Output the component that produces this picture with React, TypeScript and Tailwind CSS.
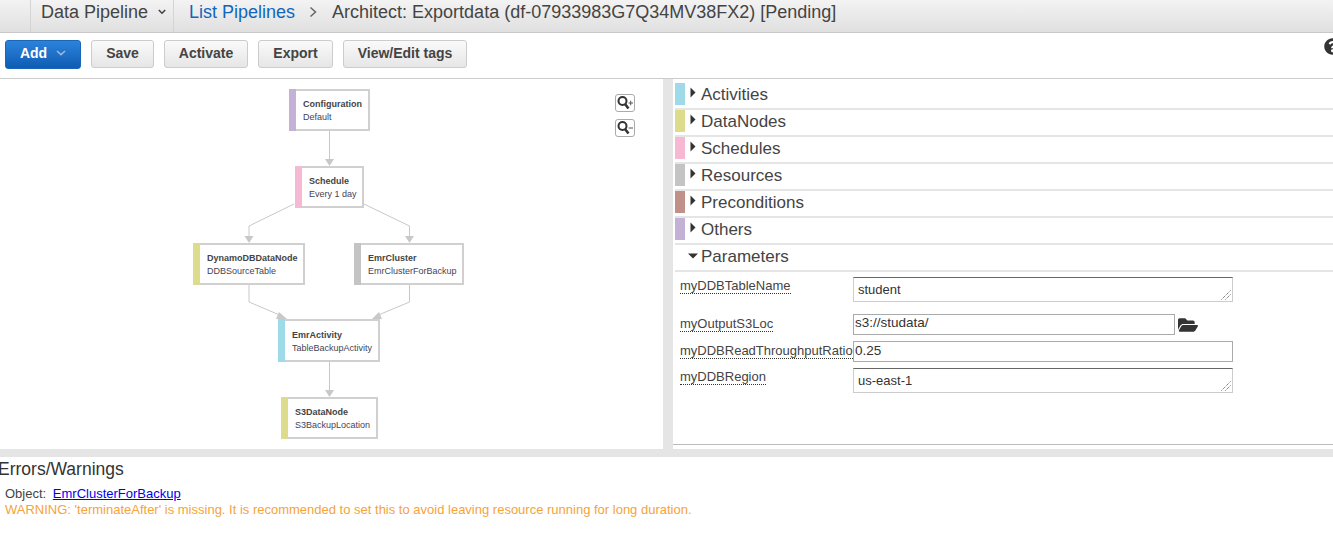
import { FaFolderOpen, FaQuestionCircle } from 'react-icons/fa';

const nodes = [
  { title: 'Configuration', sub: 'Default', left: 289, top: 89, width: 81, height: 42, strip: 'bg-[#c3b1d6]', pad: 'pl-[7px]' },
  { title: 'Schedule', sub: 'Every 1 day', left: 295, top: 166, width: 69, height: 42, strip: 'bg-[#f7b8d4]', pad: 'pl-[7px]' },
  { title: 'DynamoDBDataNode', sub: 'DDBSourceTable', left: 193, top: 243, width: 112, height: 42, strip: 'bg-[#dcdc8c]', pad: 'pl-[7px]' },
  { title: 'EmrCluster', sub: 'EmrClusterForBackup', left: 354, top: 243, width: 110, height: 42, strip: 'bg-[#c4c4c4]', pad: 'pl-[7px]' },
  { title: 'EmrActivity', sub: 'TableBackupActivity', left: 278, top: 319, width: 102, height: 43, strip: 'bg-[#9edae8]', pad: 'pl-[7px]' },
  { title: 'S3DataNode', sub: 'S3BackupLocation', left: 281, top: 397, width: 97, height: 42, strip: 'bg-[#dcdc8c]', pad: 'pl-[7px]' },
];

const sections = [
  { name: 'Activities', color: 'bg-[#9edae8]' },
  { name: 'DataNodes', color: 'bg-[#dcdc8c]' },
  { name: 'Schedules', color: 'bg-[#f7b8d4]' },
  { name: 'Resources', color: 'bg-[#c4c4c4]' },
  { name: 'Preconditions', color: 'bg-[#bf9188]' },
  { name: 'Others', color: 'bg-[#c3b1d6]' },
];

function Connectors() {
  const lines = [
    '329.5,131 329.5,160',
    '294,204 249,226 249,238',
    '364,204 409.5,226 409.5,238',
    '249,285 249,302 282,316',
    '409.5,285 409.5,302 376,316',
    '329.5,362 329.5,391',
  ];
  const heads = [
    '325,159 334,159 329.5,166',
    '244.5,236 253.5,236 249,243',
    '405,236 414,236 409.5,243',
    '279,312 276,319 287,319',
    '379,312 382,319 372,319',
    '325,390 334,390 329.5,397',
  ];
  return (
    <svg className="absolute left-0 top-0" width="663" height="449" viewBox="0 0 663 449">
      {lines.map((p) => (
        <polyline key={p} points={p} fill="none" stroke="#c8c8c8" strokeWidth="1" />
      ))}
      {heads.map((p) => (
        <polygon key={p} points={p} fill="#c8c8c8" />
      ))}
    </svg>
  );
}

function ZoomButton({ plus, className }: { plus: boolean; className: string }) {
  return (
    <div className={`absolute left-[615px] h-[18px] w-[20px] rounded-[3px] border border-[#aaa] bg-white ${className}`}>
      <svg width="18" height="16" viewBox="0 0 18 16">
        <circle cx="6.5" cy="6" r="4" fill="#fff" stroke="#333" strokeWidth="2" />
        <path d="M9 9l3.5 4.5" stroke="#333" strokeWidth="2.6" />
        <path d={plus ? 'M12.5 8h4.5M14.7 5.7v4.6' : 'M12.5 8h4.5'} stroke="#555" strokeWidth="1" fill="none" />
      </svg>
    </div>
  );
}

function ToolButton({ label, width }: { label: string; width: string }) {
  return (
    <button className={`h-[28px] ${width} rounded-[3px] border border-[#ccc] bg-gradient-to-b from-[#fafafa] to-[#e6e6e6] pb-[2px] text-[14px] font-bold text-[#444]`}>
      {label}
    </button>
  );
}

function ParamLabel({ text }: { text: string }) {
  return (
    <span className="border-b border-dotted border-[#333] text-[13px] leading-[15px] whitespace-nowrap text-[#444]">
      {text}
    </span>
  );
}

function Grip() {
  return (
    <svg className="absolute bottom-[1px] right-[1px]" width="10" height="10" viewBox="0 0 10 10">
      <path d="M0.5 9.5L9.5 0.5M4.5 9.5L9.5 4.5" stroke="#555" strokeWidth="1" strokeDasharray="1 1" />
    </svg>
  );
}

export default function App() {
  return (
    <div className="h-[536px] w-[1333px] overflow-hidden bg-white font-['Liberation_Sans',Arial,sans-serif] text-[#444]">
      {/* Top bar */}
      <div className="flex h-[33px] items-stretch border-b border-[#c8c8c8] bg-gradient-to-b from-[#f3f3f3] to-[#e0e0e0]">
        <div className="ml-[30px] flex w-[144px] items-center gap-[10px] border-x border-[#d4d4d4] pb-[8px] pl-[10px] text-[18px] whitespace-nowrap">
          Data Pipeline
          <svg width="8" height="6" viewBox="0 0 8 6">
            <path d="M0.8 1l3.2 3.2L7.2 1" fill="none" stroke="#444" strokeWidth="1.6" />
          </svg>
        </div>
        <div className="flex items-center pb-[8px] pl-[15px] text-[18px] whitespace-nowrap">
          <span className="text-[#1166bb]">List Pipelines</span>
          <svg className="mx-[14px]" width="9" height="12" viewBox="0 0 9 12">
            <path d="M1.5 1.5L6.5 6l-5 4.5" fill="none" stroke="#666" strokeWidth="1.5" />
          </svg>
          <span>Architect: Exportdata (df-07933983G7Q34MV38FX2) [Pending]</span>
        </div>
      </div>

      {/* Toolbar */}
      <div className="relative flex h-[46px] items-center gap-[10px] border-b border-[#ccc] pb-[3px] pl-[5px]">
        <button className="flex h-[29px] w-[76px] items-center justify-center gap-[9px] rounded-[3px] border border-[#1a66b8] bg-gradient-to-b from-[#2c83dc] to-[#0e5cb3] pb-[2px] text-[14px] font-bold text-white">
          Add
          <svg width="10" height="6" viewBox="0 0 10 6">
            <path d="M1 1l4 3.6L9 1" fill="none" stroke="#9db8d4" strokeWidth="1.6" />
          </svg>
        </button>
        <ToolButton label="Save" width="w-[63px]" />
        <ToolButton label="Activate" width="w-[84px]" />
        <ToolButton label="Export" width="w-[75px]" />
        <ToolButton label="View/Edit tags" width="w-[124px]" />
        <FaQuestionCircle className="absolute left-[1324px] top-[5px] text-[#333]" size={17} />
      </div>

      {/* Main panels */}
      <div className="flex h-[378px] border-b-[8px] border-[#e5e5e5]">
        {/* Diagram canvas: its top edge sits at y=79 */}
        <div className="relative h-full w-[663px] shrink-0 overflow-hidden">
          <div className="absolute left-0 top-[-79px] h-[449px] w-[663px]">
            <Connectors />
            {nodes.map((n) => (
              <div
                key={n.title}
                className="absolute flex border-2 border-[#d0d0d0] bg-white"
                style={{ left: n.left, top: n.top, width: n.width, height: n.height }}
              >
                <div className={`-my-[2px] -ml-[2px] w-[7px] shrink-0 ${n.strip}`} />
                <div className={`${n.pad} flex flex-col justify-center gap-[2px] pt-[2px] text-[9px] leading-[11px] whitespace-nowrap`}>
                  <span className="font-bold text-[#444]">{n.title}</span>
                  <span className="text-[#445]">{n.sub}</span>
                </div>
              </div>
            ))}
            <ZoomButton plus className="top-[94px]" />
            <ZoomButton plus={false} className="top-[119px]" />
          </div>
        </div>

        {/* Right panel */}
        <div className="flex-1 border-l-[10px] border-[#e5e5e5]">
          <div className="pt-[4px] pl-[2px]">
            {sections.map((s) => (
              <div key={s.name} className="flex h-[27px] border-b-2 border-[#e5e5e5]">
                <div className={`mb-[3px] w-[10px] ${s.color}`} />
                <svg className="mt-[4px] ml-[5px]" width="6" height="11" viewBox="0 0 6 11">
                  <path d="M0.5 0.5L5.5 5.5L0.5 10.5Z" fill="#333" />
                </svg>
                <span className="ml-[5px] pt-[1px] text-[17px] leading-[22px]">{s.name}</span>
              </div>
            ))}
            <div className="flex h-[27px] border-b-2 border-[#e5e5e5] pl-[13px]">
              <svg className="mt-[8px]" width="10" height="6" viewBox="0 0 10 6">
                <path d="M0 0.5H10L5 5.5Z" fill="#333" />
              </svg>
              <span className="ml-[3px] pt-[1px] text-[17px] leading-[22px]">Parameters</span>
            </div>
          </div>

          {/* Parameter rows */}
          <div className="flex h-[173px] flex-col border-b border-[#bbb] pt-[5px] pl-[7px]">
            <div className="flex h-[25px]">
              <div className="-mt-[4px] w-[173px]"><ParamLabel text="myDDBTableName" /></div>
              <div className="relative h-[25px] w-[380px] border border-[#ccc] border-t-[#666] pt-[2px] pl-[4px] text-[13px] text-[#333]">
                student
                <Grip />
              </div>
            </div>
            <div className="mt-[12px] flex h-[21px]">
              <div className="-mt-[3px] w-[173px]"><ParamLabel text="myOutputS3Loc" /></div>
              <div className="h-[21px] w-[322px] border border-[#aaa] pl-[1px] text-[13.5px] leading-[16px] text-[#333]">s3://studata/</div>
              <FaFolderOpen className="mt-[1px] ml-[3px] text-[#333]" size={20} />
            </div>
            <div className="mt-[6px] flex h-[21px]">
              <div className="-mt-[3px] w-[173px]"><ParamLabel text="myDDBReadThroughputRatio" /></div>
              <div className="h-[21px] w-[380px] border border-[#aaa] pl-[1px] text-[13.5px] leading-[17px] text-[#333]">0.25</div>
            </div>
            <div className="mt-[6px] flex h-[25px]">
              <div className="-mt-[4px] w-[173px]"><ParamLabel text="myDDBRegion" /></div>
              <div className="relative h-[25px] w-[380px] border border-[#ccc] border-t-[#666] pt-[2px] pl-[4px] text-[13px] text-[#333]">
                us-east-1
                <Grip />
              </div>
            </div>
          </div>
        </div>
      </div>

      {/* Errors */}
      <div className="pt-[2px]">
        <h3 className="-ml-[2px] text-[17.5px] leading-[20px] text-[#333]">Errors/Warnings</h3>
        <div className="mt-[7px] pl-[5px] text-[13px] leading-[16px]">
          <div>
            Object: <a className="ml-[3px] text-[#0000ee] underline">EmrClusterForBackup</a>
          </div>
          <div className="text-[#f5a33a]">
            WARNING: 'terminateAfter' is missing. It is recommended to set this to avoid leaving resource running for long duration.
          </div>
        </div>
      </div>
    </div>
  );
}
